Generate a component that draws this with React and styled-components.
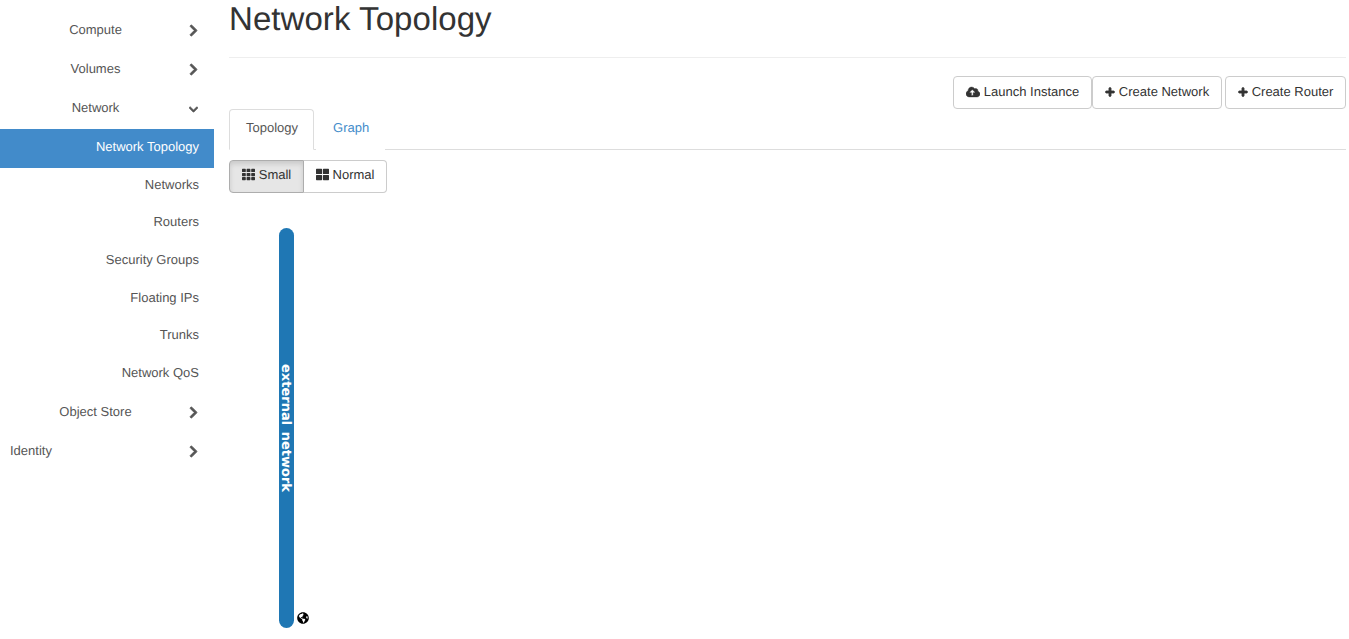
import React from 'react';
import styled, { createGlobalStyle } from 'styled-components';
import { FaChevronRight, FaChevronDown, FaCloudUploadAlt, FaPlus, FaTh, FaThLarge, FaGlobeAmericas } from 'react-icons/fa';

const GlobalStyle = createGlobalStyle`
  html, body {
    margin: 0;
    height: 100%;
    overflow: hidden;
    background: #fff;
  }
  body {
    font-family: "Liberation Sans", Arial, sans-serif;
    font-size: 13px;
    line-height: 1.43;
    color: #333;
    text-rendering: geometricPrecision;
  }
`;

const Page = styled.div`
  display: flex;
  height: 639px;
`;

const Sidebar = styled.nav`
  flex: 0 0 214px;
  padding-top: 10px;
`;

const GroupRow = styled.div`
  display: grid;
  grid-template-columns: 189px 10px;
  height: ${(p) => (p.$open ? 41 : 39)}px;
  padding-top: 13px;
  box-sizing: border-box;
  color: #555;
  line-height: 14px;
`;

const GroupLabel = styled.span`
  text-align: ${(p) => (p.$left ? 'left' : 'center')};
  padding-left: ${(p) => (p.$left ? '10px' : '2px')};
`;

const Chevron = styled.span`
  display: flex;
  justify-content: flex-end;
  margin-top: 1px;
  padding-right: 1px;
  font-size: ${(p) => (p.$down ? 15 : 13)}px;
  color: #555;
  svg {
    stroke: currentColor;
    stroke-width: 36px;
  }
`;

const SubList = styled.div`
  margin-bottom: -1.2px;
`;

const SubItem = styled.a`
  display: block;
  box-sizing: border-box;
  height: ${(p) => (p.$active ? '39px' : '37.6px')};
  padding: ${(p) => (p.$active ? 11 : 9.75)}px 15px 0 0;
  line-height: 14px;
  text-align: right;
  color: ${(p) => (p.$active ? '#fff' : '#555')};
  background: ${(p) => (p.$active ? '#428bca' : 'transparent')};
`;

const Main = styled.main`
  flex: 1;
  padding: 0 3px 0 15px;
  min-width: 0;
`;

const Header = styled.div`
  height: 57px;
  border-bottom: 1px solid #eee;
`;

const Title = styled.h1`
  margin: 0;
  font-size: 33px;
  font-weight: 400;
  line-height: 37px;
  letter-spacing: 0.06px;
  color: #333;
`;

const Actions = styled.div`
  display: flex;
  justify-content: flex-end;
  margin-top: 18px;
`;

const Button = styled.button`
  display: inline-flex;
  align-items: center;
  justify-content: center;
  gap: 4px;
  box-sizing: border-box;
  width: ${(p) => p.$width}px;
  height: 33px;
  padding: 0;
  margin-left: ${(p) => p.$gap || 0}px;
  font: inherit;
  text-rendering: inherit;
  color: #333;
  background: #fff;
  border: 1px solid #ccc;
  border-radius: 4px;
  svg {
    flex: none;
    margin-top: -2px;
    stroke: currentColor;
    stroke-width: ${(p) => p.$iconWeight ?? 20}px;
  }
`;

const Tabs = styled.div`
  display: flex;
  height: 41px;
  box-sizing: border-box;
  border-bottom: 1px solid #ddd;
`;

const Tab = styled.a`
  box-sizing: border-box;
  height: 41px;
  padding: 9px 15px 0 16px;
  line-height: 17px;
  color: ${(p) => (p.$active ? '#555' : '#428bca')};
  background: #fff;
  border: 1px solid ${(p) => (p.$active ? '#ddd' : 'transparent')};
  border-bottom-color: ${(p) => (p.$active ? '#fff' : 'transparent')};
  border-radius: 4px 4px 0 0;
  margin-right: 2px;
`;

const ToggleGroup = styled.div`
  display: flex;
  margin-top: 10px;
`;

const Toggle = styled(Button)`
  padding-bottom: 2px;
  background: ${(p) => (p.$active ? '#e6e6e6' : '#fff')};
  border-color: ${(p) => (p.$active ? '#adadad' : '#ccc')};
  box-shadow: ${(p) => (p.$active ? 'inset 0 3px 5px rgba(0,0,0,.125)' : 'none')};
  border-radius: ${(p) => (p.$first ? '4px 0 0 4px' : '0 4px 4px 0')};
  border-left-width: ${(p) => (p.$first ? 1 : 0)}px;
`;

const Canvas = styled.div`
  display: flex;
  align-items: flex-end;
  margin: 35px 0 0 50px;
  gap: 3px;
`;

const NetworkBar = styled.div`
  box-sizing: border-box;
  width: 15px;
  height: 400px;
  padding-right: 2px;
  border-radius: 7.5px;
  background: #1f77b4;
  color: #fff;
  display: flex;
  align-items: center;
  justify-content: center;
`;

const NetworkLabel = styled.span`
  writing-mode: vertical-rl;
  font-family: "DejaVu Sans", Verdana, sans-serif;
  font-size: 13px;
  font-weight: 700;
  word-spacing: 2px;
  line-height: 13px;
  white-space: nowrap;
`;

const Globe = styled(FaGlobeAmericas)`
  font-size: 12px;
  color: #000;
  margin-bottom: 4px;
`;

const groupsTop = ['Compute', 'Volumes'];
const subItems = ['Network Topology', 'Networks', 'Routers', 'Security Groups', 'Floating IPs', 'Trunks', 'Network QoS'];

function Group({ label, open, left }) {
  return (
    <GroupRow $open={open}>
      <GroupLabel $left={left}>{label}</GroupLabel>
      <Chevron $down={open}>{open ? <FaChevronDown /> : <FaChevronRight />}</Chevron>
    </GroupRow>
  );
}

export default function App() {
  return (
    <>
      <GlobalStyle />
      <Page>
        <Sidebar>
          {groupsTop.map((g) => (
            <Group key={g} label={g} />
          ))}
          <Group label="Network" open />
          <SubList>
            {subItems.map((s, i) => (
              <SubItem key={s} $active={i === 0}>
                {s}
              </SubItem>
            ))}
          </SubList>
          <Group label="Object Store" />
          <Group label="Identity" left />
        </Sidebar>
        <Main>
          <Header>
            <Title>Network Topology</Title>
          </Header>
          <Actions>
            <Button $width={139}>
              <FaCloudUploadAlt size={14} /> Launch Instance
            </Button>
            <Button $width={130} $iconWeight={50}>
              <FaPlus size={10} /> Create Network
            </Button>
            <Button $width={121} $gap={3} $iconWeight={50}>
              <FaPlus size={10} /> Create Router
            </Button>
          </Actions>
          <Tabs>
            <Tab $active>Topology</Tab>
            <Tab>Graph</Tab>
          </Tabs>
          <ToggleGroup>
            <Toggle $active $first $width={75} $iconWeight={0}>
              <FaTh size={13} /> Small
            </Toggle>
            <Toggle $width={83} $iconWeight={0}>
              <FaThLarge size={13} /> Normal
            </Toggle>
          </ToggleGroup>
          <Canvas>
            <NetworkBar>
              <NetworkLabel>external network</NetworkLabel>
            </NetworkBar>
            <Globe />
          </Canvas>
        </Main>
      </Page>
    </>
  );
}
